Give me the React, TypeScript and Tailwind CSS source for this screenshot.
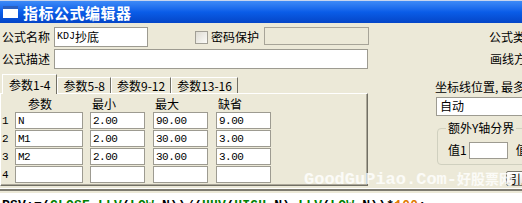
import React from "react";

const mono = "font-['Liberation_Mono','Noto_Sans_CJK_SC',monospace]";

function Field({ className = "", children }: { className?: string; children?: React.ReactNode }) {
  return (
    <div className={`flex items-center bg-white border border-[#9d9b91] whitespace-nowrap overflow-hidden ${className}`}>
      {children}
    </div>
  );
}

const params = [
  ["1", "N", "2.00", "90.00", "9.00"],
  ["2", "M1", "2.00", "30.00", "3.00"],
  ["3", "M2", "2.00", "30.00", "3.00"],
  ["4", "", "", "", ""],
];

const tabs = ["参数5-8", "参数9-12", "参数13-16"];

function Val({ v }: { v: string }) {
  return <span className={`${mono} text-[11px] tracking-[-0.5px] pl-[2px]`}>{v}</span>;
}

export default function App() {
  return (
    <div className="relative w-[522px] h-[203px] overflow-hidden bg-[#ece9d8] text-[12px] leading-[14px] text-black font-['Noto_Sans_CJK_SC',sans-serif] flex flex-col">
      {/* title bar */}
      <div className="h-[23px] shrink-0 flex items-center gap-[5px] pl-[3px] bg-gradient-to-b from-[#3d8af7] via-[#0a5de8] to-[#0545c7] border-t border-[#c7d5ee]">
        <div className="w-[15px] h-[12px] bg-white border-t-[3px] border-[#2a5fc0]" />
        <span className="text-white font-bold text-[15px] leading-[17px] tracking-[0.5px]">指标公式编辑器</span>
      </div>

      {/* name row */}
      <div className="mt-[4px] h-[20px] shrink-0 flex items-center whitespace-nowrap *:shrink-0">
        <span className="w-[54px] pl-[2px]">公式名称</span>
        <Field className="w-[94px] h-[20px] pl-[2px]">
          <span className={`${mono} text-[10px]`}>KDJ</span>
          <span>抄底</span>
        </Field>
        <div className="ml-[47px] w-[13px] h-[13px] border border-[#a19f95] bg-gradient-to-br from-[#dedcd3] to-[#fbfbf8]" />
        <span className="ml-[3px]">密码保护</span>
        <div className="ml-[5px] self-start w-[105px] h-[18px] border border-[#a7a498]" />
        <span className="ml-[120px]">公式类型</span>
      </div>

      {/* description row */}
      <div className="mt-[2px] h-[20px] shrink-0 flex items-center whitespace-nowrap *:shrink-0">
        <span className="w-[54px] pl-[2px]">公式描述</span>
        <Field className="w-[314px] h-[20px]" />
        <span className="ml-[122px]">画线方法</span>
      </div>

      {/* params + axis */}
      <div className="mt-[5px] h-[112px] shrink-0 flex *:shrink-0">
        <div className="w-[368px] flex flex-col">
          <div className="h-[19px] flex items-end whitespace-nowrap">
            <div className="relative z-10 ml-[2px] -mb-[1px] h-[20px] px-[6px] pt-[3px] bg-[#ece9d8] border-t border-l border-white border-r border-r-[#716f64]">
              参数1-4
            </div>
            {tabs.map((t) => (
              <div key={t} className="h-[16px] px-[5px] pt-[1px] border-t border-l border-white border-r border-r-[#716f64]">
                {t}
              </div>
            ))}
          </div>
          <div className="h-[93px] border border-white border-r-[#716f64] border-b-[#716f64] shadow-[inset_-1px_-1px_0_#aca899] pt-[3px]">
            <div className="h-[14px] flex whitespace-nowrap *:shrink-0">
              <span className="w-[14px]" />
              <span className="w-[68px] pl-[13px]">参数</span>
              <span className="ml-[7px] w-[55px] pl-[2px]">最小</span>
              <span className="ml-[8px] w-[55px] pl-[2px]">最大</span>
              <span className="ml-[8px] w-[55px] pl-[2px]">缺省</span>
            </div>
            <div className="mt-[1px] flex flex-col gap-[1px]">
              {params.map((r) => (
                <div key={r[0]} className="h-[17px] flex items-center *:shrink-0">
                  <span className={`${mono} w-[14px] text-[11px] pl-[1px]`}>{r[0]}</span>
                  <Field className="w-[68px] h-[17px]"><Val v={r[1]} /></Field>
                  <Field className="ml-[7px] w-[55px] h-[17px]"><Val v={r[2]} /></Field>
                  <Field className="ml-[8px] w-[55px] h-[17px]"><Val v={r[3]} /></Field>
                  <Field className="ml-[8px] w-[55px] h-[17px]"><Val v={r[4]} /></Field>
                </div>
              ))}
            </div>
          </div>
        </div>

        <div className="ml-[67px] w-[200px] flex flex-col pt-[6px] whitespace-nowrap">
          <span>坐标线位置, 最多6个,用分号分隔</span>
          <Field className="mt-[3px] ml-[1px] w-[150px] h-[19px] pl-[3px]">自动</Field>
          <div className="relative mt-[12px] ml-[2px] w-[150px] h-[38px] border border-[#d0d0bf] rounded-[4px] pt-[13px]">
            <span className="absolute -top-[7px] left-[8px] px-[2px] leading-[12px] bg-[#ece9d8]">额外Y轴分界</span>
            <div className="flex items-center *:shrink-0">
              <span className="ml-[10px]">值1</span>
              <Field className="ml-[2px] w-[39px] h-[17px]" />
              <span className="ml-[8px]">值2</span>
            </div>
          </div>
          <div className="mt-[6px] ml-[71px] w-[40px] h-[15px] border border-[#7a786e] rounded-[2px] bg-gradient-to-b from-white to-[#e3e2da] pl-[2px] leading-[13px]">
            引入
          </div>
        </div>
      </div>

      {/* separator */}
      <div className="mt-[2px] h-[1px] shrink-0 bg-white" />
      <div className="h-[2px] shrink-0 bg-[#7d7b70]" />

      {/* formula editor */}
      <div className={`mt-[2px] flex-1 bg-white pl-[2px] pt-[5px] ${mono} font-bold text-[13px] leading-[16px] tracking-[0.2px] whitespace-nowrap`}>
        <span>RSV:=(</span>
        <span className="text-[#008000]">CLOSE</span>
        <span>-</span>
        <span className="text-[#008000]">LLV</span>
        <span>(</span>
        <span className="text-[#008000]">LOW</span>
        <span>,N))/(</span>
        <span className="text-[#008000]">HHV</span>
        <span>(</span>
        <span className="text-[#008000]">HIGH</span>
        <span>,N)-</span>
        <span className="text-[#008000]">LLV</span>
        <span>(</span>
        <span className="text-[#008000]">LOW</span>
        <span>,N))*</span>
        <span className="text-[#e07800]">100</span>
        <span>;</span>
      </div>

      {/* watermark */}
      <div className="absolute left-[304px] top-[168px] text-white/80 font-bold whitespace-nowrap leading-[20px]">
        <span className="font-['Liberation_Mono',monospace] text-[17px]">GoodGuPiao.Com-</span>
        <span className="text-[14px]">好股票网</span>
      </div>
    </div>
  );
}
